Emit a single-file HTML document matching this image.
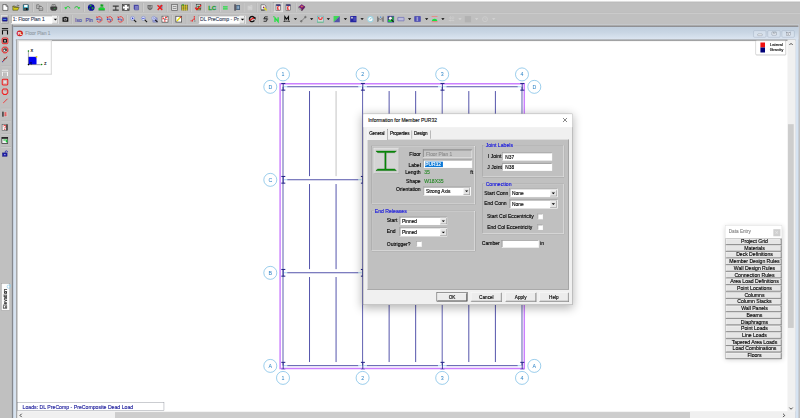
<!DOCTYPE html>
<html lang="en"><head><meta charset="utf-8"><title>RISAFloor - Information for Member PUR32</title>
<style>
html,body{margin:0;padding:0;background:#c0c0c0;}
body{width:800px;height:418px;overflow:hidden;background:#c0c0c0;font-family:"Liberation Sans",sans-serif;}
#root{will-change:opacity;position:absolute;left:0;top:0;width:1920px;height:1004px;transform:scale(0.4166667);transform-origin:0 0;overflow:hidden;font-size:12px;color:#000;}
#root div,#root span,#root svg{position:absolute;box-sizing:border-box;}
.ab{position:absolute;}
.tx{white-space:nowrap;line-height:1;-webkit-text-stroke:0.3px;}
.vsep{width:2px;height:40px;border-left:1px solid #8a8a8a;border-right:1px solid #f4f4f4;}
.ic{width:16px;height:16px;overflow:visible;}
.arr{width:0;height:0;border-left:4px solid transparent;border-right:4px solid transparent;border-top:4.5px solid #000;}
.combo{background:#fff;border:1px solid #7a7a7a;}
.cbtn{background:#e1e1e1;border:1px solid #adadad;}
.inp{background:#fff;border:1px solid;border-color:#6a6a6a #fafafa #fafafa #6a6a6a;box-shadow:inset 1px 1px 0 #8e8e8e;}
.sunk{border:1px solid;border-color:#6a6a6a #fafafa #fafafa #6a6a6a;box-shadow:inset 1px 1px 0 #8e8e8e;}
.grp{border:1px solid;border-color:#9a9a9a #f2f2f2 #f2f2f2 #9a9a9a;box-shadow:1px 1px 0 #f2f2f2 inset, 1px 1px 0 #9a9a9a;}
.glab{color:#1414e0;background:#c0c0c0;padding:0 2px;}
.btn{background:#ececec;border:1px solid;border-color:#fdfdfd #3c3c3c #3c3c3c #fdfdfd;box-shadow:inset -1px -1px 0 #8c8c8c;text-align:center;}
.chk{background:#fff;border:1px solid;border-color:#7a7a7a #f4f4f4 #f4f4f4 #7a7a7a;box-shadow:inset 1px 1px 0 #b0b0b0;width:13px;height:13px;}
.deb{background:#e6e6e6;border:1px solid;border-color:#fff #555 #555 #fff;box-shadow:0 0 0 1px #888;text-align:center;}
</style></head><body><div id="root">
<div id="toolbars" style="left:0;top:0;width:1920px;height:61.4px;background:#c0c0c0;">
<div style="left:0;top:0;width:1920px;height:7.4px;background:linear-gradient(#ffffff,#fbfbfb 30%,#d8d8d8 55%,#bababa 80%,#c0c0c0);"></div>
<div style="left:0;top:31.2px;width:1920px;height:2px;border-top:1px solid #acacac;border-bottom:1.2px solid #e2e2e2;"></div>
<div style="left:655px;top:5px;width:24px;height:24px;background:#d2d2d2;border:1px solid;border-color:#8a8a8a #f4f4f4 #f4f4f4 #8a8a8a;"></div>
<svg class="ic" style="left:5.3px;top:9.5px;width:16px;height:16px;" viewBox="0 0 16 16"><path d="M1.8 1H9.5L13.8 5V15H1.8Z" fill="#fff" stroke="#2a2a2a" stroke-width="1.4"/><path d="M9.5 1V5H13.8" fill="none" stroke="#2a2a2a" stroke-width="1.2"/></svg>
<svg class="ic" style="left:29.5px;top:9.5px;width:16px;height:16px;" viewBox="0 0 16 16"><path d="M0.8 4.5H6L7.5 6.5H12.5V8.5" fill="#a8a018" stroke="#3a3a0a" stroke-width="1.2"/><path d="M0.8 14.5V4.5L4 8H16L12.5 14.5Z" fill="#d0c81c" stroke="#3a3a10" stroke-width="1.2"/><path d="M10 3.5C12 1.5 14 2.5 14.5 4.5M14.5 4.5L15.5 2.5M14.5 4.5L12.5 4" fill="none" stroke="#222"/></svg>
<svg class="ic" style="left:53.8px;top:9.5px;width:16px;height:16px;" viewBox="0 0 16 16"><rect x="1.5" y="1.5" width="13" height="13" fill="#18a4c0" stroke="#1a1a2a"/><rect x="4" y="2" width="8" height="5.5" fill="#fff"/><rect x="3.5" y="9" width="9" height="5.5" fill="#101010"/><rect x="5" y="10" width="2" height="3.5" fill="#ddd"/></svg>
<svg class="ic" style="left:87.4px;top:9.5px;width:16px;height:16px;" viewBox="0 0 16 16"><path d="M1 1.5H6.5L9 4V10.5H1Z" fill="#d0d0d0" stroke="#4a4a4a" stroke-width="1.3"/><path d="M2.5 4H6M2.5 6.5H7.5" stroke="#666"/><path d="M7 5.5H12.5L15.5 8.5V15H7Z" fill="#dcdcdc" stroke="#3a3a3a" stroke-width="1.3"/><path d="M9 9.5H13.5M9 12H13.5" stroke="#555" stroke-width="1.2"/></svg>
<svg class="ic" style="left:120.5px;top:9.5px;width:16px;height:16px;" viewBox="0 0 16 16"><path d="M4 1H11.5L12.5 3.5V7H4Z" fill="#dcdcdc" stroke="#333" stroke-width="1.2"/><path d="M6 3H10M6 5H11" stroke="#555"/><path d="M0.5 6.5H15.5V12.5H0.5Z" fill="#444" stroke="#1c1c1c"/><path d="M2 12.5H14L13 15H3Z" fill="#5a5a5a" stroke="#1c1c1c"/><rect x="8" y="9" width="4" height="1.6" fill="#40b050"/></svg>
<svg class="ic" style="left:154.3px;top:9.5px;width:16px;height:16px;" viewBox="0 0 16 16"><path d="M4.5 10.5C4 5 12.5 3.5 14 10" fill="none" stroke="#22b436" stroke-width="2"/><path d="M0.5 7L7.5 7.8L3.2 13Z" fill="#20e03c"/></svg>
<svg class="ic" style="left:176.9px;top:9.5px;width:16px;height:16px;" viewBox="0 0 16 16"><path d="M11.5 10.5C12 5 3.5 3.5 2 10" fill="none" stroke="#22b436" stroke-width="2"/><path d="M15.5 7L8.5 7.8L12.8 13Z" fill="#20e03c"/></svg>
<svg class="ic" style="left:211.2px;top:9.5px;width:16px;height:16px;" viewBox="0 0 16 16"><g transform="translate(-0.8 -0.8) scale(1.1)"><circle cx="8" cy="8" r="7.3" fill="#101098"/><path d="M5 2C8 1 10 3 8.5 5C7 6 5 6.5 4 5Z M9 7.5C11 6.5 13.5 8 13 10C12 12 10 13 9 11Z M3 9C4.5 9 5.5 11 5 13C3.5 12.5 2.5 11 3 9Z" fill="#18a030"/></g></svg>
<svg class="ic" style="left:235.7px;top:9.5px;width:16px;height:16px;" viewBox="0 0 16 16"><rect x="5" y="0.5" width="7" height="5.5" fill="#20c030"/><path d="M6 2H9M7 4H11" stroke="#0a5a14" stroke-width="1.2"/><rect x="0.5" y="9" width="15" height="5" fill="#18d830"/><path d="M0.5 14.5H15.5" stroke="#0a6a18" stroke-width="1.4"/><path d="M3 8H13" stroke="#2aa83a" stroke-width="1.6"/></svg>
<svg class="ic" style="left:269.8px;top:9.5px;width:16px;height:16px;" viewBox="0 0 16 16"><path d="M0.7 3.2H15V6.1H9.1V12.8H15V15.9H0.7V12.8H6.7V6.1H0.7Z" fill="#383838"/></svg>
<svg class="ic" style="left:293.8px;top:9.5px;width:16px;height:16px;" viewBox="0 0 16 16"><g transform="translate(-1.2 0) scale(1.15 1)"><rect x="1" y="1" width="14" height="14" fill="#6e6e6e" stroke="#3c3c3c" stroke-width="1.4"/><path d="M8 2V14M2 8H14" stroke="#fff" stroke-width="4.6"/><path d="M2 2L5 5M14 2L11 5M2 14L5 11M14 14L11 11" stroke="#2a2a2a" stroke-width="1"/></g></svg>
<svg class="ic" style="left:319.2px;top:9.5px;width:16px;height:16px;" viewBox="0 0 16 16"><path d="M2 1.5H13V12H2Z" fill="#4a4aa8"/><path d="M4 3.5H13.5V14H4Z" fill="#5a5ab4" stroke="#38389a"/><path d="M5 6H13M5 9H13M5 12H13" stroke="#b8b8e0" stroke-width="1.2"/></svg>
<svg class="ic" style="left:351.8px;top:9.5px;width:16px;height:16px;" viewBox="0 0 16 16"><path d="M2 2H14V8C14 11 11 13.5 8 14.5C5 13.5 2 11 2 8Z" fill="#6a6a6a"/><path d="M5.5 4V8C5.5 10 10.5 10 10.5 8V4" fill="none" stroke="#c8c8c8" stroke-width="1.4"/><path d="M12 3V8" stroke="#bbb" stroke-width="1.2"/></svg>
<svg class="ic" style="left:375.8px;top:9.5px;width:16px;height:16px;" viewBox="0 0 16 16"><rect x="7" y="2" width="7" height="9" fill="#8a7aa0"/><path d="M2 2.5L13.5 14M13 2L2.5 14" stroke="#f01818" stroke-width="3"/></svg>
<svg class="ic" style="left:410.9px;top:9.5px;width:16px;height:16px;" viewBox="0 0 16 16"><rect x="1" y="1" width="14" height="14" fill="#e6e6e6" stroke="#5a5a5a" stroke-width="1.6"/><path d="M4 5.5H12M4 10.5H12" stroke="#555" stroke-width="1.4"/><path d="M4 3V13M12 3V13" stroke="#999" stroke-width="1"/></svg>
<svg class="ic" style="left:434.6px;top:9.5px;width:16px;height:16px;" viewBox="0 0 16 16"><rect x="1" y="1.5" width="14" height="13.5" fill="#c8b818"/><path d="M1 1.5V15M5.5 1.5V15M10 1.5V15M14.8 1.5V15" stroke="#3a3a20" stroke-width="1.5"/><path d="M1 5H15M1 9H15M1 12.5H15" stroke="#e8e070" stroke-width="1"/><rect x="1.5" y="0.5" width="5" height="2.5" fill="#20a030"/></svg>
<svg class="ic" style="left:467.5px;top:9.5px;width:16px;height:16px;" viewBox="0 0 16 16"><rect x="3" y="1" width="11" height="8.5" fill="#f4f4f4" stroke="#333" stroke-width="1.4"/><rect x="5.5" y="3.5" width="5" height="4" fill="#208040"/><rect x="5" y="10.5" width="9" height="3.5" fill="#b8b030" stroke="#333"/><path d="M0.5 8.5L4 13L14.5 2.5" fill="none" stroke="#f01010" stroke-width="2.8"/></svg>
<svg class="ic" style="left:532.8px;top:9.5px;width:16px;height:16px;" viewBox="0 0 16 16"><path d="M2.2 6.3H13.4M2.2 11.4H13.4" stroke="#24e044" stroke-width="3.2"/></svg>
<svg class="ic" style="left:561.1px;top:9.5px;width:16px;height:16px;" viewBox="0 0 16 16"><rect x="1" y="0.5" width="4.5" height="15" fill="#4a4a55"/><rect x="2.2" y="0.5" width="1.4" height="15" fill="#8a8a98"/><rect x="7" y="2.5" width="7.5" height="11" fill="#4a78a8" stroke="#3a4a5a"/><rect x="9" y="5" width="3" height="6" fill="#b0c0d0"/></svg>
<svg class="ic" style="left:592.3px;top:9.5px;width:16px;height:16px;" viewBox="0 0 16 16"><path d="M3 4.5H8L9.5 3H13V13.5H3Z" fill="#cdcdcd" stroke="#d8d8d8"/><path d="M5 8H12M5 11H12" stroke="#dadada" stroke-width="1.2"/></svg>
<svg class="ic" style="left:625.4px;top:9.5px;width:16px;height:16px;" viewBox="0 0 16 16"><path d="M1.5 1.5H10L13 4.5V13.5H1.5Z" fill="#fafafa" stroke="#3a3a3a" stroke-width="1.3"/><circle cx="8" cy="7.5" r="2" fill="#c01830"/><circle cx="6.8" cy="8.5" r="1.2" fill="#2030b0"/><path d="M9 8.5L15 15" stroke="#e8e010" stroke-width="3"/><path d="M1.5 14.5H10" stroke="#222" stroke-width="1.5"/></svg>
<svg class="ic" style="left:660px;top:9.5px;width:16px;height:16px;" viewBox="0 0 16 16"><rect x="2.5" y="1.5" width="11" height="14" fill="#fff" stroke="#333" stroke-width="1.2"/><rect x="3" y="1" width="10" height="3" fill="#181870"/><path d="M6 6V13.2M6 6H10.5M6 9.5H10M6 13.2H10.5" stroke="#e02828" stroke-width="2" fill="none"/></svg>
<svg class="ic" style="left:683.8px;top:9.5px;width:16px;height:16px;" viewBox="0 0 16 16"><rect x="2.5" y="1.5" width="11" height="14" fill="#fff" stroke="#333" stroke-width="1.2"/><rect x="3" y="1" width="10" height="3" fill="#181870"/><path d="M6 6V13.2M6 6H10.5M6 9.5H10M6 13.2H10.5" stroke="#e02828" stroke-width="2" fill="none"/></svg>
<svg class="ic" style="left:715.7px;top:9.5px;width:16px;height:16px;" viewBox="0 0 16 16"><path d="M1 7L8 1L15 5.5L8.5 12.5Z" fill="#901c80" stroke="#601060"/><path d="M1 7L8.5 12.5V15.5L1 10Z" fill="#f4f4f4" stroke="#222"/><path d="M8.5 12.5L15 5.5V8.5L8.5 15.5Z" fill="#701868" stroke="#301030"/><path d="M7 4L11 5.5L8 7.5Z" fill="#f0d020"/></svg>
<span class="tx" style="left:499.9px;top:10.5px;font-size:14.4px;font-weight:bold;color:#24a03a;letter-spacing:-0.2px;-webkit-text-stroke:0.7px #24a03a;">LC</span>
<div style="left:78.4px;top:7px;width:3px;height:22px;border-left:1px solid #adadad;border-right:1.6px solid #dedede;"></div>
<div style="left:111.8px;top:7px;width:3px;height:22px;border-left:1px solid #adadad;border-right:1.6px solid #dedede;"></div>
<div style="left:143.9px;top:7px;width:3px;height:22px;border-left:1px solid #adadad;border-right:1.6px solid #dedede;"></div>
<div style="left:200.3px;top:7px;width:3px;height:22px;border-left:1px solid #adadad;border-right:1.6px solid #dedede;"></div>
<div style="left:261.1px;top:7px;width:3px;height:22px;border-left:1px solid #adadad;border-right:1.6px solid #dedede;"></div>
<div style="left:342.2px;top:7px;width:3px;height:22px;border-left:1px solid #adadad;border-right:1.6px solid #dedede;"></div>
<div style="left:400.0px;top:7px;width:3px;height:22px;border-left:1px solid #adadad;border-right:1.6px solid #dedede;"></div>
<div style="left:456.9px;top:7px;width:3px;height:22px;border-left:1px solid #adadad;border-right:1.6px solid #dedede;"></div>
<div style="left:490.7px;top:7px;width:3px;height:22px;border-left:1px solid #adadad;border-right:1.6px solid #dedede;"></div>
<div style="left:525.5px;top:7px;width:3px;height:22px;border-left:1px solid #adadad;border-right:1.6px solid #dedede;"></div>
<div style="left:582.9px;top:7px;width:3px;height:22px;border-left:1px solid #adadad;border-right:1.6px solid #dedede;"></div>
<div style="left:616.0px;top:7px;width:3px;height:22px;border-left:1px solid #adadad;border-right:1.6px solid #dedede;"></div>
<div style="left:650.3px;top:7px;width:3px;height:22px;border-left:1px solid #adadad;border-right:1.6px solid #dedede;"></div>
<div style="left:707.9px;top:7px;width:3px;height:22px;border-left:1px solid #adadad;border-right:1.6px solid #dedede;"></div>
<div style="left:2.6px;top:36px;width:17.8px;height:20px;background:#c8c8c8;border:1px solid;border-color:#f8f8f8 #7a7a7a #7a7a7a #f8f8f8;"></div>
<svg class="ic" style="left:4.1px;top:38.5px;width:15px;height:15px;" viewBox="0 0 16 16"><rect x="1.5" y="3" width="13" height="10" rx="1.5" fill="#1818a0" stroke="#303050"/><path d="M4 8H12" stroke="#60c0f0" stroke-width="2"/></svg>
<div class="sunk" style="left:26.4px;top:36.5px;width:113.5px;height:20.5px;background:#fff;border-color:#7a7a7a #f4f4f4 #f4f4f4 #7a7a7a;"></div>
<span class="tx" style="left:30.5px;top:41px;font-size:11.8px;color:#38445c;">1: Floor Plan 1</span>
<div style="left:125px;top:38px;width:13.9px;height:17.5px;background:#ececec;border:1px solid;border-color:#ffffff #8e8e8e #8e8e8e #ffffff;"></div>
<div class="arr" style="left:128.5px;top:45px;"></div>
<div class="sunk" style="left:475.9px;top:36.5px;width:113.5px;height:20.5px;background:#fff;border-color:#7a7a7a #f4f4f4 #f4f4f4 #7a7a7a;"></div>
<div style="left:480px;top:38px;width:93.6px;height:19px;overflow:hidden;"><span class="tx" style="left:0;top:3px;font-size:12.2px;color:#38445c;">DL PreComp - PreComposite Dead Load</span></div>
<div style="left:574.6px;top:38px;width:13.9px;height:17.5px;background:#ececec;border:1px solid;border-color:#ffffff #8e8e8e #8e8e8e #ffffff;"></div>
<div class="arr" style="left:578px;top:45px;"></div>
<svg class="ic" style="left:148.6px;top:38px;width:16px;height:16px;" viewBox="0 0 16 16"><path d="M1 3.5H5L6 2H10L11 3.5H15V14H1Z" fill="#101010"/><rect x="4" y="6" width="8" height="5" rx="1" fill="#b8b8b8"/><rect x="6" y="7.5" width="4" height="2" fill="#303030"/></svg>
<svg class="ic" style="left:230.4px;top:38px;width:16px;height:16px;" viewBox="0 0 16 16"><path d="M5.5 2.5A6.6 6.6 0 1 1 2.6 12" fill="none" stroke="#f03434" stroke-width="2.1"/><path d="M0.5 1.5L5.5 3L2.5 6Z" fill="#f01818"/><path d="M1.5 8H9" stroke="#2030c0" stroke-width="1.6"/><path d="M1 8L4 6V10Z" fill="#2030c0"/><text x="8" y="11.5" font-size="8" font-weight="bold" font-family="Liberation Sans, sans-serif" fill="#2838b0">x</text></svg>
<svg class="ic" style="left:255.4px;top:38px;width:16px;height:16px;" viewBox="0 0 16 16"><path d="M5.5 2.5A6.6 6.6 0 1 1 2.6 12" fill="none" stroke="#f03434" stroke-width="2.1"/><path d="M0.5 1.5L5.5 3L2.5 6Z" fill="#f01818"/><path d="M1.5 8H9" stroke="#2030c0" stroke-width="1.6"/><path d="M1 8L4 6V10Z" fill="#2030c0"/><text x="8" y="11.5" font-size="8" font-weight="bold" font-family="Liberation Sans, sans-serif" fill="#2838b0">y</text></svg>
<svg class="ic" style="left:280.6px;top:38px;width:16px;height:16px;" viewBox="0 0 16 16"><path d="M5.5 2.5A6.6 6.6 0 1 1 2.6 12" fill="none" stroke="#f03434" stroke-width="2.1"/><path d="M0.5 1.5L5.5 3L2.5 6Z" fill="#f01818"/><path d="M1.5 8H9" stroke="#2030c0" stroke-width="1.6"/><path d="M1 8L4 6V10Z" fill="#2030c0"/><text x="8" y="11.5" font-size="8" font-weight="bold" font-family="Liberation Sans, sans-serif" fill="#2838b0">z</text></svg>
<svg class="ic" style="left:312.2px;top:38px;width:16px;height:16px;" viewBox="0 0 16 16"><circle cx="6" cy="6" r="4.8" fill="#e8ecf8" stroke="#6a78c0" stroke-width="1.3"/><path d="M4.5 3.5L9 6L4.5 8.5Z" fill="#2030c8"/><path d="M9.5 9.5L15 15" stroke="#151515" stroke-width="2.6"/></svg>
<svg class="ic" style="left:337.7px;top:38px;width:16px;height:16px;" viewBox="0 0 16 16"><circle cx="6" cy="6" r="4.8" fill="#e8ecf8" stroke="#6a78c0" stroke-width="1.3"/><path d="M3 6H9" stroke="#2030c8" stroke-width="1.8"/><path d="M9.5 9.5L15 15" stroke="#151515" stroke-width="2.6"/></svg>
<svg class="ic" style="left:363.1px;top:38px;width:16px;height:16px;" viewBox="0 0 16 16"><rect x="4" y="5" width="10" height="10" fill="#9aa0d8" stroke="#5a60b0"/><circle cx="6" cy="6" r="4.8" fill="#e8ecf8" stroke="#6a78c0" stroke-width="1.3"/><circle cx="6" cy="6" r="1.8" fill="none" stroke="#3040c0"/><path d="M9.5 9.5L15 15" stroke="#151515" stroke-width="2.6"/></svg>
<svg class="ic" style="left:388.1px;top:38px;width:16px;height:16px;" viewBox="0 0 16 16"><rect x="0.8" y="0.8" width="14.4" height="14.4" fill="#f4f4f4" stroke="#3a3a3a" stroke-width="1.4"/><circle cx="8" cy="8" r="4.6" fill="none" stroke="#fff" stroke-width="3.4"/><circle cx="8" cy="8" r="4.6" fill="none" stroke="#f03030" stroke-width="3.4" stroke-dasharray="3.6 3.6" stroke-dashoffset="1.8"/><circle cx="8" cy="8" r="2.4" fill="#808080"/></svg>
<svg class="ic" style="left:420.5px;top:38px;width:16px;height:16px;" viewBox="0 0 16 16"><rect x="1" y="1" width="14" height="14" fill="#fff" stroke="#3a3a3a" stroke-width="1.6"/><path d="M3.5 12.5L12 3.5" stroke="#e8e010" stroke-width="3.4"/><path d="M11.5 4L13.5 2" stroke="#e02020" stroke-width="3.4"/><path d="M2.5 14L4.5 13L3.2 11.8Z" fill="#222"/></svg>
<svg class="ic" style="left:455.3px;top:38px;width:16px;height:16px;" viewBox="0 0 16 16"><path d="M2 12H7V9H11V5" fill="none" stroke="#e82020" stroke-width="1.6" stroke-dasharray="2 1"/><rect x="10" y="1" width="3" height="3" fill="#f02020"/><rect x="10" y="6" width="3" height="3" fill="#f02020"/><rect x="5" y="10.5" width="3" height="3" fill="#f02020"/><rect x="11" y="11" width="3" height="3" fill="#7a8a8a"/></svg>
<svg class="ic" style="left:597.1px;top:38px;width:16px;height:16px;" viewBox="0 0 16 16"><path d="M13.5 11A6.3 6.3 0 1 1 14 5.5" fill="none" stroke="#0c0c0c" stroke-width="3.3"/><path d="M9.5 3.5H16.5V9.5Z" fill="#0c0c0c"/><path d="M1 11L6 9L9 6L13 7" fill="none" stroke="#f01818" stroke-width="2.4"/><circle cx="10" cy="6" r="1.8" fill="#f01818"/></svg>
<svg class="ic" style="left:630.2px;top:38px;width:16px;height:16px;" viewBox="0 0 16 16"><path d="M12.5 2.5H5.5L3.5 7H11.5L9.5 13H2.5" fill="none" stroke="#151515" stroke-width="2"/><path d="M1.5 7.5H14" stroke="#333" stroke-width="1"/></svg>
<svg class="ic" style="left:654.7px;top:38px;width:16px;height:16px;" viewBox="0 0 16 16"><rect x="0.5" y="1" width="2.4" height="2.4" fill="#28d840"/><path d="M5 14.5V5L12.5 14V3.5" fill="none" stroke="#24e044" stroke-width="3.2"/></svg>
<svg class="ic" style="left:679.9px;top:38px;width:16px;height:16px;" viewBox="0 0 16 16"><path d="M3.5 10.5V2L8 8L12.5 2V10.5" fill="none" stroke="#0a0a0a" stroke-width="2.5"/><path d="M1 13H15" stroke="#111" stroke-width="1.6"/><path d="M0 13L3 11V15Z M16 13L13 11V15Z" fill="#111"/></svg>
<svg class="ic" style="left:720.2px;top:38px;width:16px;height:16px;" viewBox="0 0 16 16"><path d="M3 13L13 3" stroke="#5a5a5a" stroke-width="1.5"/><circle cx="3" cy="13" r="2" fill="#8a8a8a" stroke="#444"/><circle cx="13" cy="3" r="2" fill="#8a8a8a" stroke="#444"/></svg>
<svg class="ic" style="left:760.8px;top:38px;width:16px;height:16px;" viewBox="0 0 16 16"><rect x="0.8" y="0.8" width="14.4" height="14.4" fill="#d4d8d8" stroke="#60b4b4" stroke-width="1.6"/><path d="M0.5 15.2H15.5" stroke="#50c060" stroke-width="1.4"/><path d="M4 3V5.5C4 9.5 12 9.5 12 5.5V3" fill="none" stroke="#f02828" stroke-width="2.8"/></svg>
<svg class="ic" style="left:800.4px;top:38px;width:16px;height:16px;" viewBox="0 0 16 16"><path d="M0.5 0.5H15.5L0.5 15.5Z" fill="#40d858"/><path d="M15.5 0.5V15.5H0.5Z" fill="#5454a8"/></svg>
<svg class="ic" style="left:840.2px;top:38px;width:16px;height:16px;" viewBox="0 0 16 16"><rect x="0.5" y="0.5" width="15" height="15" rx="1" fill="#2424a0"/><rect x="3" y="2.5" width="3.5" height="4" fill="#f0f0e0"/><rect x="8" y="3" width="6" height="9" fill="#4a4ab8"/></svg>
<svg class="ic" style="left:881px;top:38px;width:16px;height:16px;" viewBox="0 0 16 16"><circle cx="8" cy="8" r="6.3" fill="#fdfdfd" stroke="#9ad4e4" stroke-width="2.4"/><path d="M8 8L10.5 4.5M8 8L6 9.5" stroke="#2a9aa8" stroke-width="1.3"/><path d="M8 0V2M8 14V16" stroke="#9ad4e4" stroke-width="2"/></svg>
<svg class="ic" style="left:904.8px;top:38px;width:16px;height:16px;" viewBox="0 0 16 16"><path d="M1.5 1.5V14.5M14.5 1.5V14.5" stroke="#4a4a4a" stroke-width="1.8"/><path d="M3.5 13V5L8 10L12.5 5V13" fill="none" stroke="#6a6a6a" stroke-width="1.6"/><circle cx="8.5" cy="3" r="1.6" fill="#2a80e0"/></svg>
<svg class="ic" style="left:929.8px;top:38px;width:16px;height:16px;" viewBox="0 0 16 16"><rect x="0.8" y="0.8" width="14.4" height="14.4" fill="#3a3a58" stroke="#4848c0" stroke-width="1.4"/><rect x="1.5" y="9.5" width="13" height="5" fill="#20d040"/><rect x="11.5" y="2" width="3" height="8" fill="#20c040"/><circle cx="7" cy="6" r="3.6" fill="#f8f8f8"/><path d="M9 9L14.5 14.5" stroke="#0a0a0a" stroke-width="2.4"/></svg>
<svg class="ic" style="left:953.5px;top:38px;width:16px;height:16px;" viewBox="0 0 16 16"><rect x="0.7" y="3.8" width="15" height="8.2" rx="0.6" fill="#bcbcdc" stroke="#6464b2" stroke-width="1.5"/></svg>
<svg class="ic" style="left:994.1px;top:38px;width:16px;height:16px;" viewBox="0 0 16 16"><rect x="0.5" y="1" width="15" height="13" fill="#3434a8"/><rect x="6" y="2.5" width="2.2" height="10" fill="#f4f4f4"/><rect x="9" y="2.5" width="4.5" height="10" fill="#5a5ac0"/><path d="M3 2.5V12.5" stroke="#7070c8" stroke-width="1.2"/></svg>
<svg class="ic" style="left:1034.6px;top:38px;width:16px;height:16px;" viewBox="0 0 16 16"><path d="M1 1.5H15" stroke="#f07878" stroke-width="1.8"/><path d="M1 14H15" stroke="#f06868" stroke-width="1.8"/><path d="M1.5 12.5C2 5 14 5 14.5 12.5Z" fill="#18e040"/></svg>
<svg class="ic" style="left:1075.7px;top:38px;width:16px;height:16px;" viewBox="0 0 16 16"><path d="M5 1V15M11 1V15M1 5H15M1 11H15" stroke="#d4d4d4" stroke-width="1.6" stroke-dasharray="3 1.5"/></svg>
<svg class="ic" style="left:1114.6px;top:38px;width:16px;height:16px;" viewBox="0 0 16 16"><rect x="0.5" y="0.5" width="15" height="15" fill="#b2b2b2"/></svg>
<svg class="ic" style="left:1155.6px;top:38px;width:16px;height:16px;" viewBox="0 0 16 16"><circle cx="8" cy="8" r="6" fill="none" stroke="#cfcfcf" stroke-width="1.8"/><path d="M8 4V8H11" stroke="#cfcfcf" stroke-width="1.4" fill="none"/></svg>
<div class="arr" style="left:704.5px;top:43.5px;"></div>
<div class="arr" style="left:744.3px;top:43.5px;"></div>
<div class="arr" style="left:784.4px;top:43.5px;"></div>
<div class="arr" style="left:825px;top:43.5px;"></div>
<div class="arr" style="left:864.8px;top:43.5px;"></div>
<div class="arr" style="left:979px;top:43.5px;"></div>
<div class="arr" style="left:1019.6px;top:43.5px;"></div>
<div class="arr" style="left:1059.4px;top:43.5px;"></div>
<div class="arr" style="left:1099.8px;top:43.5px;border-top-color:#d6d6d6;"></div>
<div class="arr" style="left:1139.8px;top:43.5px;border-top-color:#d6d6d6;"></div>
<div class="arr" style="left:1180.6px;top:43.5px;border-top-color:#d6d6d6;"></div>
<span class="tx" style="left:180.2px;top:42px;font-size:12.2px;font-weight:normal;color:#4646aa;letter-spacing:0;">Iso</span>
<span class="tx" style="left:205.2px;top:42px;font-size:12.2px;font-weight:normal;color:#4646aa;letter-spacing:0;">Pln</span>
<div style="left:172.0px;top:36px;width:3px;height:22px;border-left:1px solid #adadad;border-right:1.6px solid #dedede;"></div>
<div style="left:303.3px;top:36px;width:3px;height:22px;border-left:1px solid #adadad;border-right:1.6px solid #dedede;"></div>
<div style="left:411.1px;top:36px;width:3px;height:22px;border-left:1px solid #adadad;border-right:1.6px solid #dedede;"></div>
<div style="left:445.6px;top:36px;width:3px;height:22px;border-left:1px solid #adadad;border-right:1.6px solid #dedede;"></div>
<div style="left:621.3px;top:36px;width:3px;height:22px;border-left:1px solid #adadad;border-right:1.6px solid #dedede;"></div>
</div>
<div id="sidebar" style="left:0;top:61.4px;width:29.8px;height:950px;background:#c0c0c0;">
<svg class="ic" style="left:4.1px;top:6.0px;width:16px;height:16px;" viewBox="0 0 16 16"><path d="M0.5 1.8H15.5" stroke="#0a0a0a" stroke-width="2.6"/><path d="M0.5 6H15.5" stroke="#0a0a0a" stroke-width="1.6"/><path d="M2 6V15.5M14 6V15.5" stroke="#0a0a0a" stroke-width="2.6"/></svg>
<svg class="ic" style="left:4.1px;top:28.3px;width:16px;height:16px;" viewBox="0 0 16 16"><rect x="1.2" y="1.2" width="13.6" height="13.6" rx="2.5" fill="#c8b4b4" stroke="#f01818" stroke-width="2.3"/><rect x="4.3" y="5" width="7.4" height="6" fill="#b0b0b0" stroke="#0a0a0a" stroke-width="2.2"/></svg>
<svg class="ic" style="left:4.1px;top:50.4px;width:16px;height:16px;" viewBox="0 0 16 16"><path d="M4 1.2H12L14.8 5V11L11 14.8H5L1.2 11V5Z" fill="#c8b4b4" stroke="#f01818" stroke-width="2.3"/><rect x="5" y="4.5" width="7" height="6" fill="#222"/><rect x="4" y="6.5" width="5" height="5" fill="#eee" stroke="#333"/></svg>
<svg class="ic" style="left:4.1px;top:73.0px;width:16px;height:16px;" viewBox="0 0 16 16"><path d="M2 14L6 10V7H10L13 2" fill="none" stroke="#111" stroke-width="1.8"/><path d="M3 13L6.5 9.5M9 7L13 2.5" stroke="#f01818" stroke-width="2"/><circle cx="2.5" cy="14" r="1.3" fill="#3030c0"/></svg>
<svg class="ic" style="left:4.1px;top:105.8px;width:16px;height:16px;" viewBox="0 0 16 16"><path d="M0.5 1.8H15.5" stroke="#f6f6f6" stroke-width="2.4"/><path d="M0.5 6H15.5" stroke="#f6f6f6" stroke-width="1.5"/><path d="M2 6V15.5M14 6V15.5" stroke="#f6f6f6" stroke-width="2.4"/><path d="M3.5 7V15M1 3.5H15" stroke="#9a9a9a" stroke-width="0.8"/></svg>
<svg class="ic" style="left:4.1px;top:127.7px;width:16px;height:16px;" viewBox="0 0 16 16"><rect x="1.3" y="1.3" width="13.4" height="13.4" rx="2" fill="#d4b4b4" stroke="#ee2020" stroke-width="2.4"/><rect x="5" y="5" width="6" height="5.5" fill="#e6e0e0"/></svg>
<svg class="ic" style="left:4.1px;top:150.7px;width:16px;height:16px;" viewBox="0 0 16 16"><path d="M4 1.3H12L14.7 5V11L11 14.7H5L1.3 11V5Z" fill="#d4b4b4" stroke="#ee2020" stroke-width="2.4"/><rect x="5" y="5" width="6" height="5" fill="#e6e0e0"/><rect x="6" y="4" width="6" height="4" fill="#a09090" opacity="0.6"/></svg>
<svg class="ic" style="left:4.1px;top:173.3px;width:16px;height:16px;" viewBox="0 0 16 16"><path d="M2 14L14 2" stroke="#f02828" stroke-width="2"/><path d="M1.5 14.5L4 12" stroke="#f4f4f4" stroke-width="1.5"/></svg>
<svg class="ic" style="left:4.1px;top:205.0px;width:16px;height:16px;" viewBox="0 0 16 16"><rect x="1" y="2" width="4" height="12" fill="#4a4a4a"/><path d="M7 5H13M7 8H13M7 11H13" stroke="#f01818" stroke-width="1.8"/><rect x="6" y="2" width="9" height="12" fill="#e0d8d8" opacity="0.5"/><path d="M8.5 3V13" stroke="#f01818" stroke-width="1.5"/></svg>
<svg class="ic" style="left:4.1px;top:236.2px;width:16px;height:16px;" viewBox="0 0 16 16"><rect x="1" y="1" width="13" height="14" fill="#f2f2f2" stroke="#444" stroke-width="1.2"/><path d="M4.5 5C4.5 2 10.5 2 10.5 5C10.5 7.5 7.5 7 7.5 10" fill="none" stroke="#e81818" stroke-width="2.2"/><rect x="6.3" y="11.5" width="2.4" height="2.4" fill="#e81818"/><rect x="11" y="1" width="3" height="14" fill="#222"/></svg>
<svg class="ic" style="left:4.1px;top:267.6px;width:16px;height:16px;" viewBox="0 0 16 16"><rect x="0.5" y="1" width="14" height="14" fill="#f0f0f0" stroke="#222" stroke-width="1.6"/><rect x="0.5" y="0.5" width="14" height="3.5" fill="#111"/><path d="M4 7H12V10" fill="none" stroke="#18c838" stroke-width="2.6"/><path d="M9 9.5H15L12 13.5Z" fill="#18c838"/></svg>
<svg class="ic" style="left:4.1px;top:298.3px;width:16px;height:16px;" viewBox="0 0 16 16"><rect x="2" y="7" width="11" height="8" fill="#1c1ca8" stroke="#101070"/><path d="M8.5 7V4.5C8.5 1 14 1 14 4.5V5.5" fill="none" stroke="#2828b0" stroke-width="2"/><rect x="6.5" y="9.5" width="2.5" height="3" fill="#d8d8f8"/></svg>
<div style="left:3px;top:96.5px;width:24px;height:3px;border-top:1px solid #a4a4a4;border-bottom:1.4px solid #dedede;"></div>
<div style="left:3px;top:197.5px;width:24px;height:3px;border-top:1px solid #a4a4a4;border-bottom:1.4px solid #dedede;"></div>
<div style="left:3px;top:228.2px;width:24px;height:3px;border-top:1px solid #a4a4a4;border-bottom:1.4px solid #dedede;"></div>
<div style="left:3px;top:259.9px;width:24px;height:3px;border-top:1px solid #a4a4a4;border-bottom:1.4px solid #dedede;"></div>
<div style="left:3px;top:290.9px;width:24px;height:3px;border-top:1px solid #a4a4a4;border-bottom:1.4px solid #dedede;"></div>
<div style="left:3.1px;top:618.7px;width:21.4px;height:65px;background:#fbfbfb;border:1px solid #8f8f8f;"></div>
<span class="tx" style="left:7.9px;top:679.2px;font-size:11.5px;transform:rotate(-90deg);transform-origin:0 0;">Elevation</span>
<svg style="left:14.6px;top:620.9px;width:12px;height:12px;" viewBox="0 0 12 12"><circle cx="6" cy="6" r="4" fill="none" stroke="#8ccdf0" stroke-width="1.6"/><path d="M7 1L10 1L10 4" fill="none" stroke="#8ccdf0" stroke-width="1.4"/></svg>
</div>
<div id="child" style="left:27.6px;top:58.6px;width:1889.8px;height:960px;background:#d6e3f1;border-right:1.8px solid #b6bac2;">
<div style="left:0;top:0;width:100%;height:6.2px;background:linear-gradient(#c0c0c0,#acacac 35%,#8e8f92 75%,#a2aab4);"></div>
<div style="left:0;top:6.2px;width:100%;height:29.5px;background:linear-gradient(#c0cedd,#c9d6e4 45%,#dbe5f1);"></div>
</div>
<div style="left:40.3px;top:73px;width:14.4px;height:14.4px;border-radius:50%;background:#d02424;"></div>
<span class="tx" style="left:43px;top:76.8px;font-size:8.2px;font-weight:bold;color:#fff;letter-spacing:-0.3px;">FL</span>
<span class="tx" style="left:60.7px;top:75.8px;font-size:11.2px;color:#959ea8;">Floor Plan 1</span>
<div style="left:1808.2px;top:72.5px;width:31px;height:17.5px;border:1px solid #a2afc0;border-radius:3px;background:linear-gradient(#d3deea,#d9e3ef);"></div>
<div style="left:1817.6px;top:80.6px;width:12px;height:5px;border:1px solid #77818e;border-radius:1.5px;background:#f6f8fb;"></div>
<div style="left:1842px;top:72.5px;width:31px;height:17.5px;border:1px solid #a2afc0;border-radius:3px;background:linear-gradient(#d3deea,#d9e3ef);"></div>
<div style="left:1851.5px;top:75.8px;width:12px;height:9px;border:1px solid #77818e;border-radius:1.5px;background:#e9eef5;"></div>
<div style="left:1854.5px;top:78.2px;width:6px;height:3px;border:1px solid #77818e;background:#f6f8fb;"></div>
<div style="left:1876.3px;top:72.5px;width:31.2px;height:17.5px;border:1px solid #a2afc0;border-radius:3px;background:linear-gradient(#d3deea,#d9e3ef);"></div>
<div style="left:1886.9px;top:77.3px;width:10px;height:9px;border:1px solid #77818e;background:#f2f5f9;"></div>
<svg style="left:1884.9px;top:75.4px;width:14px;height:11px;" viewBox="0 0 14 11"><path d="M1 0.5L4 3.5M13 0.5L10 3.5M4.5 4.5L9.5 9M9.5 4.5L4.5 9" stroke="#77818e" stroke-width="1.3" fill="none"/></svg>
<div id="canvas" style="left:38.4px;top:94.3px;width:1870.6px;height:913.7px;background:#fff;"></div>
<div style="left:38.4px;top:94.1px;width:1870.6px;height:4.6px;background:linear-gradient(#b4bcc6,#9c9ea2 35%,#a4a4a4 75%,#e0e0e0);"></div>
<div style="left:27.1px;top:59px;width:4.8px;height:960px;background:linear-gradient(90deg,#c0c0c0,#8e9094 45%,#7c7e84 80%,#a8b0bc);"></div>
<div style="left:38.2px;top:95px;width:5px;height:960px;background:linear-gradient(90deg,#c4cbd4,#a6a8aa 30%,#b0b0b0 65%,#f4f4f4);"></div>
<div style="left:1909px;top:94.3px;width:1.2px;height:960px;background:#b8bec8;"></div>
<div style="left:42.7px;top:97.4px;width:81.6px;height:81.6px;background:#fff;border:2px solid #d9d9d9;border-right-color:#cfcfcf;border-bottom-color:#cfcfcf;"></div>
<svg style="left:42.7px;top:97.4px;width:81.6px;height:80.4px;" viewBox="0 0 34 33.5">
<rect x="10.5" y="16.4" width="8.1" height="7.7" fill="#0000f0"/>
<path d="M10.5 10.6V24.2H23.8" fill="none" stroke="#555" stroke-width="0.5"/>
<path d="M18.6 24.2H23.8" fill="none" stroke="#b0b0b0" stroke-width="0.6"/>
<circle cx="10.5" cy="10.7" r="0.75" fill="#0a8a0a"/><circle cx="23.8" cy="24.2" r="0.75" fill="#0a8a0a"/><circle cx="18.6" cy="16.4" r="0.9" fill="#e0d000"/><circle cx="10.6" cy="24.2" r="0.8" fill="#000"/>
<text x="12.6" y="11.2" font-size="4.1" font-weight="bold" font-family="Liberation Sans, sans-serif" fill="#000">X</text>
<text x="26.2" y="24.8" font-size="4.1" font-weight="bold" font-family="Liberation Sans, sans-serif" fill="#112">Z</text>
<text x="12.3" y="24.3" font-size="3.2" font-weight="bold" font-family="Liberation Sans, sans-serif" fill="#000">Y</text>
</svg>
<svg id="plan" style="left:0;top:0;width:1920px;height:1003.2px;" viewBox="0 0 800 418">
<path d="M280.1 83.7H524.3V368.5H280.1Z" fill="none" stroke="#cc80ff" stroke-width="1.45"/>
<path d="M283.0 86.75V365.65" stroke="#2a2a96" stroke-width="0.75" fill="none"/>
<path d="M362.6 86.75V365.65" stroke="#2a2a96" stroke-width="0.75" fill="none"/>
<path d="M442.2 86.75V365.65" stroke="#2a2a96" stroke-width="0.75" fill="none"/>
<path d="M522.0 86.75V365.65" stroke="#2a2a96" stroke-width="0.75" fill="none"/>
<path d="M287.2 86.75H358.40000000000003" stroke="#2a2a96" stroke-width="0.8" fill="none"/>
<path d="M284.0 86.75H287.2 M358.40000000000003 86.75H361.6" stroke="#8fd0f0" stroke-width="0.8" fill="none"/>
<path d="M366.8 86.75H438.0" stroke="#2a2a96" stroke-width="0.8" fill="none"/>
<path d="M363.6 86.75H366.8 M438.0 86.75H441.2" stroke="#8fd0f0" stroke-width="0.8" fill="none"/>
<path d="M446.4 86.75H517.8" stroke="#2a2a96" stroke-width="0.8" fill="none"/>
<path d="M443.2 86.75H446.4 M517.8 86.75H521.0" stroke="#8fd0f0" stroke-width="0.8" fill="none"/>
<path d="M287.2 179.75H358.40000000000003" stroke="#2a2a96" stroke-width="0.8" fill="none"/>
<path d="M284.0 179.75H287.2 M358.40000000000003 179.75H361.6" stroke="#8fd0f0" stroke-width="0.8" fill="none"/>
<path d="M366.8 179.75H438.0" stroke="#2a2a96" stroke-width="0.8" fill="none"/>
<path d="M363.6 179.75H366.8 M438.0 179.75H441.2" stroke="#8fd0f0" stroke-width="0.8" fill="none"/>
<path d="M446.4 179.75H517.8" stroke="#2a2a96" stroke-width="0.8" fill="none"/>
<path d="M443.2 179.75H446.4 M517.8 179.75H521.0" stroke="#8fd0f0" stroke-width="0.8" fill="none"/>
<path d="M287.2 272.75H358.40000000000003" stroke="#2a2a96" stroke-width="0.8" fill="none"/>
<path d="M284.0 272.75H287.2 M358.40000000000003 272.75H361.6" stroke="#8fd0f0" stroke-width="0.8" fill="none"/>
<path d="M366.8 272.75H438.0" stroke="#2a2a96" stroke-width="0.8" fill="none"/>
<path d="M363.6 272.75H366.8 M438.0 272.75H441.2" stroke="#8fd0f0" stroke-width="0.8" fill="none"/>
<path d="M446.4 272.75H517.8" stroke="#2a2a96" stroke-width="0.8" fill="none"/>
<path d="M443.2 272.75H446.4 M517.8 272.75H521.0" stroke="#8fd0f0" stroke-width="0.8" fill="none"/>
<path d="M287.2 365.65H358.40000000000003" stroke="#2a2a96" stroke-width="0.8" fill="none"/>
<path d="M284.0 365.65H287.2 M358.40000000000003 365.65H361.6" stroke="#8fd0f0" stroke-width="0.8" fill="none"/>
<path d="M366.8 365.65H438.0" stroke="#2a2a96" stroke-width="0.8" fill="none"/>
<path d="M363.6 365.65H366.8 M438.0 365.65H441.2" stroke="#8fd0f0" stroke-width="0.8" fill="none"/>
<path d="M446.4 365.65H517.8" stroke="#2a2a96" stroke-width="0.8" fill="none"/>
<path d="M443.2 365.65H446.4 M517.8 365.65H521.0" stroke="#8fd0f0" stroke-width="0.8" fill="none"/>
<path d="M309.53 91.05V176.15" stroke="#2a2a96" stroke-width="0.8" fill="none"/>
<path d="M309.53 184.05V269.15" stroke="#2a2a96" stroke-width="0.8" fill="none"/>
<path d="M309.53 277.05V362.04999999999995" stroke="#2a2a96" stroke-width="0.8" fill="none"/>
<path d="M336.07 91.05V176.15" stroke="#b4b4b4" stroke-width="0.8" fill="none"/>
<path d="M336.07 184.05V269.15" stroke="#2a2a96" stroke-width="0.8" fill="none"/>
<path d="M336.07 277.05V362.04999999999995" stroke="#2a2a96" stroke-width="0.8" fill="none"/>
<path d="M389.13 91.05V176.15" stroke="#2a2a96" stroke-width="0.8" fill="none"/>
<path d="M389.13 184.05V269.15" stroke="#2a2a96" stroke-width="0.8" fill="none"/>
<path d="M389.13 277.05V362.04999999999995" stroke="#2a2a96" stroke-width="0.8" fill="none"/>
<path d="M415.67 91.05V176.15" stroke="#2a2a96" stroke-width="0.8" fill="none"/>
<path d="M415.67 184.05V269.15" stroke="#2a2a96" stroke-width="0.8" fill="none"/>
<path d="M415.67 277.05V362.04999999999995" stroke="#2a2a96" stroke-width="0.8" fill="none"/>
<path d="M468.8 91.05V176.15" stroke="#2a2a96" stroke-width="0.8" fill="none"/>
<path d="M468.8 184.05V269.15" stroke="#2a2a96" stroke-width="0.8" fill="none"/>
<path d="M468.8 277.05V362.04999999999995" stroke="#2a2a96" stroke-width="0.8" fill="none"/>
<path d="M495.4 91.05V176.15" stroke="#2a2a96" stroke-width="0.8" fill="none"/>
<path d="M495.4 184.05V269.15" stroke="#2a2a96" stroke-width="0.8" fill="none"/>
<path d="M495.4 277.05V362.04999999999995" stroke="#2a2a96" stroke-width="0.8" fill="none"/>
<path d="M281.3 83.45H285.3" stroke="#1e1e86" stroke-width="1.0" fill="none"/>
<path d="M281.3 90.15H285.3" stroke="#1e1e86" stroke-width="1.0" fill="none"/>
<path d="M283.2 83.45V90.15" stroke="#2a2a90" stroke-width="0.9" fill="none"/>
<path d="M281.3 176.45H285.3" stroke="#1e1e86" stroke-width="1.0" fill="none"/>
<path d="M281.3 183.15H285.3" stroke="#1e1e86" stroke-width="1.0" fill="none"/>
<path d="M283.2 176.45V183.15" stroke="#2a2a90" stroke-width="0.9" fill="none"/>
<path d="M281.3 269.45H285.3" stroke="#1e1e86" stroke-width="1.0" fill="none"/>
<path d="M281.3 276.15H285.3" stroke="#1e1e86" stroke-width="1.0" fill="none"/>
<path d="M283.2 269.45V276.15" stroke="#2a2a90" stroke-width="0.9" fill="none"/>
<path d="M281.3 362.34999999999997H285.3" stroke="#1e1e86" stroke-width="1.0" fill="none"/>
<path d="M281.3 369.04999999999995H285.3" stroke="#8a78d0" stroke-width="1.0" fill="none"/>
<path d="M283.2 362.34999999999997V369.04999999999995" stroke="#2a2a90" stroke-width="0.9" fill="none"/>
<path d="M360.90000000000003 83.45H364.90000000000003" stroke="#1e1e86" stroke-width="1.0" fill="none"/>
<path d="M360.90000000000003 90.15H364.90000000000003" stroke="#1e1e86" stroke-width="1.0" fill="none"/>
<path d="M362.8 83.45V90.15" stroke="#2a2a90" stroke-width="0.9" fill="none"/>
<path d="M360.90000000000003 176.45H364.90000000000003" stroke="#1e1e86" stroke-width="1.0" fill="none"/>
<path d="M360.90000000000003 183.15H364.90000000000003" stroke="#1e1e86" stroke-width="1.0" fill="none"/>
<path d="M362.8 176.45V183.15" stroke="#2a2a90" stroke-width="0.9" fill="none"/>
<path d="M360.90000000000003 269.45H364.90000000000003" stroke="#1e1e86" stroke-width="1.0" fill="none"/>
<path d="M360.90000000000003 276.15H364.90000000000003" stroke="#1e1e86" stroke-width="1.0" fill="none"/>
<path d="M362.8 269.45V276.15" stroke="#2a2a90" stroke-width="0.9" fill="none"/>
<path d="M360.90000000000003 362.34999999999997H364.90000000000003" stroke="#1e1e86" stroke-width="1.0" fill="none"/>
<path d="M360.90000000000003 369.04999999999995H364.90000000000003" stroke="#8a78d0" stroke-width="1.0" fill="none"/>
<path d="M362.8 362.34999999999997V369.04999999999995" stroke="#2a2a90" stroke-width="0.9" fill="none"/>
<path d="M440.5 83.45H444.5" stroke="#1e1e86" stroke-width="1.0" fill="none"/>
<path d="M440.5 90.15H444.5" stroke="#1e1e86" stroke-width="1.0" fill="none"/>
<path d="M442.4 83.45V90.15" stroke="#2a2a90" stroke-width="0.9" fill="none"/>
<path d="M440.5 176.45H444.5" stroke="#1e1e86" stroke-width="1.0" fill="none"/>
<path d="M440.5 183.15H444.5" stroke="#1e1e86" stroke-width="1.0" fill="none"/>
<path d="M442.4 176.45V183.15" stroke="#2a2a90" stroke-width="0.9" fill="none"/>
<path d="M440.5 269.45H444.5" stroke="#1e1e86" stroke-width="1.0" fill="none"/>
<path d="M440.5 276.15H444.5" stroke="#1e1e86" stroke-width="1.0" fill="none"/>
<path d="M442.4 269.45V276.15" stroke="#2a2a90" stroke-width="0.9" fill="none"/>
<path d="M440.5 362.34999999999997H444.5" stroke="#1e1e86" stroke-width="1.0" fill="none"/>
<path d="M440.5 369.04999999999995H444.5" stroke="#8a78d0" stroke-width="1.0" fill="none"/>
<path d="M442.4 362.34999999999997V369.04999999999995" stroke="#2a2a90" stroke-width="0.9" fill="none"/>
<path d="M520.3 83.45H524.3" stroke="#1e1e86" stroke-width="1.0" fill="none"/>
<path d="M520.3 90.15H524.3" stroke="#1e1e86" stroke-width="1.0" fill="none"/>
<path d="M522.2 83.45V90.15" stroke="#2a2a90" stroke-width="0.9" fill="none"/>
<path d="M520.3 176.45H524.3" stroke="#1e1e86" stroke-width="1.0" fill="none"/>
<path d="M520.3 183.15H524.3" stroke="#1e1e86" stroke-width="1.0" fill="none"/>
<path d="M522.2 176.45V183.15" stroke="#2a2a90" stroke-width="0.9" fill="none"/>
<path d="M520.3 269.45H524.3" stroke="#1e1e86" stroke-width="1.0" fill="none"/>
<path d="M520.3 276.15H524.3" stroke="#1e1e86" stroke-width="1.0" fill="none"/>
<path d="M522.2 269.45V276.15" stroke="#2a2a90" stroke-width="0.9" fill="none"/>
<path d="M520.3 362.34999999999997H524.3" stroke="#1e1e86" stroke-width="1.0" fill="none"/>
<path d="M520.3 369.04999999999995H524.3" stroke="#8a78d0" stroke-width="1.0" fill="none"/>
<path d="M522.2 362.34999999999997V369.04999999999995" stroke="#2a2a90" stroke-width="0.9" fill="none"/>
<circle cx="283.0" cy="74.4" r="6.5" fill="#fff" stroke="#49a6dc" stroke-width="0.55"/>
<text x="283.0" y="76.30000000000001" font-size="5.3" text-anchor="middle" font-family="Liberation Sans, sans-serif" fill="#2b82c6">1</text>
<circle cx="283.0" cy="377.9" r="6.5" fill="#fff" stroke="#49a6dc" stroke-width="0.55"/>
<text x="283.0" y="379.79999999999995" font-size="5.3" text-anchor="middle" font-family="Liberation Sans, sans-serif" fill="#2b82c6">1</text>
<circle cx="362.6" cy="74.4" r="6.5" fill="#fff" stroke="#49a6dc" stroke-width="0.55"/>
<text x="362.6" y="76.30000000000001" font-size="5.3" text-anchor="middle" font-family="Liberation Sans, sans-serif" fill="#2b82c6">2</text>
<circle cx="362.6" cy="377.9" r="6.5" fill="#fff" stroke="#49a6dc" stroke-width="0.55"/>
<text x="362.6" y="379.79999999999995" font-size="5.3" text-anchor="middle" font-family="Liberation Sans, sans-serif" fill="#2b82c6">2</text>
<circle cx="442.2" cy="74.4" r="6.5" fill="#fff" stroke="#49a6dc" stroke-width="0.55"/>
<text x="442.2" y="76.30000000000001" font-size="5.3" text-anchor="middle" font-family="Liberation Sans, sans-serif" fill="#2b82c6">3</text>
<circle cx="442.2" cy="377.9" r="6.5" fill="#fff" stroke="#49a6dc" stroke-width="0.55"/>
<text x="442.2" y="379.79999999999995" font-size="5.3" text-anchor="middle" font-family="Liberation Sans, sans-serif" fill="#2b82c6">3</text>
<circle cx="522.0" cy="74.4" r="6.5" fill="#fff" stroke="#49a6dc" stroke-width="0.55"/>
<text x="522.0" y="76.30000000000001" font-size="5.3" text-anchor="middle" font-family="Liberation Sans, sans-serif" fill="#2b82c6">4</text>
<circle cx="522.0" cy="377.9" r="6.5" fill="#fff" stroke="#49a6dc" stroke-width="0.55"/>
<text x="522.0" y="379.79999999999995" font-size="5.3" text-anchor="middle" font-family="Liberation Sans, sans-serif" fill="#2b82c6">4</text>
<circle cx="270.3" cy="86.85" r="6.5" fill="#fff" stroke="#49a6dc" stroke-width="0.55"/>
<text x="270.3" y="88.75" font-size="5.3" text-anchor="middle" font-family="Liberation Sans, sans-serif" fill="#2b82c6">D</text>
<circle cx="270.3" cy="179.85" r="6.5" fill="#fff" stroke="#49a6dc" stroke-width="0.55"/>
<text x="270.3" y="181.75" font-size="5.3" text-anchor="middle" font-family="Liberation Sans, sans-serif" fill="#2b82c6">C</text>
<circle cx="270.3" cy="272.85" r="6.5" fill="#fff" stroke="#49a6dc" stroke-width="0.55"/>
<text x="270.3" y="274.75" font-size="5.3" text-anchor="middle" font-family="Liberation Sans, sans-serif" fill="#2b82c6">B</text>
<circle cx="270.3" cy="365.9" r="6.5" fill="#fff" stroke="#49a6dc" stroke-width="0.55"/>
<text x="270.3" y="367.79999999999995" font-size="5.3" text-anchor="middle" font-family="Liberation Sans, sans-serif" fill="#2b82c6">A</text>
<circle cx="534.3" cy="86.85" r="6.5" fill="#fff" stroke="#49a6dc" stroke-width="0.55"/>
<text x="534.3" y="88.75" font-size="5.3" text-anchor="middle" font-family="Liberation Sans, sans-serif" fill="#2b82c6">D</text>
<circle cx="534.3" cy="365.9" r="6.5" fill="#fff" stroke="#49a6dc" stroke-width="0.55"/>
<text x="534.3" y="367.79999999999995" font-size="5.3" text-anchor="middle" font-family="Liberation Sans, sans-serif" fill="#2b82c6">A</text>
</svg>
<div style="left:1813.2px;top:97.4px;width:72.5px;height:34.6px;background:#fff;border:1.6px solid #adadad;border-radius:3px;box-shadow:1px 1px 1px #ddd;"></div>
<div style="left:1824.7px;top:101.8px;width:11.8px;height:12.2px;background:#f01010;"></div>
<div style="left:1824.7px;top:114px;width:11.8px;height:12.2px;background:#000078;"></div>
<span class="tx" style="left:1847.5px;top:102.5px;font-size:10.3px;color:#111;">Lateral</span>
<span class="tx" style="left:1847.5px;top:115.4px;font-size:10.3px;color:#111;">Gravity</span>
<div style="left:1890px;top:94.6px;width:19px;height:892.8px;background:#f0f0f0;"></div>
<div style="left:1891px;top:297.6px;width:14.4px;height:489.6px;background:#cdcdcd;"></div>
<svg style="left:1890.2px;top:86.4px;width:17px;height:960px;" viewBox="0 0 17 960"><path d="M4.5 22L8.5 18L12.5 22" fill="none" stroke="#404040" stroke-width="2.2"/><path d="M4.5 892.2L8.5 896.2L12.5 892.2" fill="none" stroke="#404040" stroke-width="2.2"/></svg>
<div style="left:42.2px;top:965.8px;width:351.4px;height:19.7px;background:#fff;border:1px solid #828790;"></div>
<span class="tx" style="left:54.2px;top:970.6px;font-size:12.4px;color:#1c1c9c;">Loads: DL PreComp - PreComposite Dead Load</span>
<div style="left:42.2px;top:987.1px;width:1865.8px;height:19.2px;background:#f0f0f0;"></div>
<div style="left:276px;top:988.6px;width:1380px;height:16.8px;background:#cdcdcd;"></div>
<svg style="left:42.2px;top:988.1px;width:1872px;height:17px;" viewBox="0 0 1872 17"><path d="M10 5L6 9L10 13" fill="none" stroke="#303030" stroke-width="2.2"/><path d="M1837.4 5l4 4l-4 4" fill="none" stroke="#303030" stroke-width="2.2"/></svg>
<div id="dlg" style="left:870.5px;top:273.1px;width:503.3px;height:458.9px;background:#f0f0f0;border:1px solid #8c8c8c;box-shadow:0 5px 22px 2px rgba(0,0,0,0.30);">
<div style="left:0;top:0;width:100%;height:29.5px;background:#fff;"></div>
<span class="tx" style="left:12.0px;top:9.8px;font-size:11.9px;color:#111;">Information for Member PUR32</span>
<svg style="left:478.5px;top:8.1px;width:12px;height:12px;" viewBox="0 0 12 12"><path d="M1 1L11 11M11 1L1 11" stroke="#222" stroke-width="1.3" fill="none"/></svg>
<div style="left:9.8px;top:60.0px;width:483.6px;height:360.5px;background:#c0c0c0;border:1px solid;border-color:#fdfdfd #6e6e6e #6e6e6e #fdfdfd;"></div>
<div style="left:9.8px;top:34.5px;width:49.7px;height:27.4px;background:#f0f0f0;border:1px solid;border-color:#fdfdfd #6e6e6e transparent #fdfdfd;border-bottom:none;"></div>
<div style="left:116.1px;top:38.8px;width:1px;height:20.6px;background:#6e6e6e;"></div>
<div style="left:160.5px;top:38.8px;width:1px;height:20.6px;background:#6e6e6e;"></div>
<span class="tx" style="left:14.6px;top:41.0px;font-size:11px;letter-spacing:-0.35px;">General</span>
<span class="tx" style="left:64.3px;top:42.4px;font-size:11px;letter-spacing:-0.35px;">Properties</span>
<span class="tx" style="left:122.4px;top:42.4px;font-size:11px;letter-spacing:-0.35px;">Design</span>
<div class="grp" style="left:19.4px;top:75.7px;width:249.4px;height:140.0px;"></div>
<div style="left:25.4px;top:81.1px;width:61.2px;height:61.4px;background:#d4d4d4;border:1px solid;border-color:#f4f4f4 #9c9c9c #9c9c9c #f4f4f4;"></div>
<svg style="left:25.4px;top:81.1px;width:61.2px;height:61.4px;" viewBox="0 0 25.5 25.6">
<path d="M2.2 3.2H22.6L20.8 4.7H12.3V21.2H20.8L22.6 22.7H2.2L4 21.2H11.1V4.7H4Z" fill="#0a9a0a" stroke="#056005" stroke-width="0.5"/></svg>
<span class="tx" style="right:362.9px;top:91.1px;font-size:12.1px;color:#000;">Floor</span>
<div class="sunk" style="left:143.1px;top:84.6px;width:118.9px;height:19.8px;background:#c6c6c6;"></div>
<span class="tx" style="left:151.2px;top:90.0px;font-size:11.6px;color:#8f8f8f;">Floor Plan 1</span>
<span class="tx" style="right:362.9px;top:115.6px;font-size:12.1px;color:#000;">Label</span>
<div class="inp" style="left:143.1px;top:109.0px;width:118.9px;height:19.6px;"></div>
<div style="left:148.5px;top:113.7px;width:43.2px;height:13.0px;background:#0a78d7;"></div>
<span class="tx" style="left:149.2px;top:114.2px;font-size:11.6px;color:#fff;">PUR32</span>
<span class="tx" style="right:363.3px;top:133.8px;font-size:12.1px;color:#000;">Length</span>
<span class="tx" style="left:146.8px;top:133.8px;font-size:12.1px;color:#2a8a2a;">35</span>
<span class="tx" style="left:257.2px;top:133.8px;font-size:12.1px;color:#000;">ft</span>
<span class="tx" style="right:363.3px;top:154.5px;font-size:12.1px;color:#000;">Shape</span>
<span class="tx" style="left:146.8px;top:154.5px;font-size:12.1px;color:#2a8a2a;">W18X35</span>
<span class="tx" style="right:363.3px;top:174.4px;font-size:12.1px;color:#000;">Orientation</span>
<div class="inp" style="left:144.6px;top:173.6px;width:114.1px;height:21.0px;"></div>
<span class="tx" style="left:150.7px;top:179.6px;font-size:11.6px;color:#000;">Strong Axis</span>
<div style="left:240.7px;top:176.7px;width:16px;height:15.9px;background:#e4e4e4;border:1px solid;border-color:#fff #6a6a6a #6a6a6a #fff;"></div>
<div class="arr" style="left:244.7px;top:183.1px;"></div>
<div class="grp" style="left:285.8px;top:73.8px;width:195.4px;height:77.2px;"></div>
<span class="tx glab" style="left:292.0px;top:69.2px;font-size:12.3px;">Joint Labels</span>
<span class="tx" style="left:299.7px;top:95.7px;font-size:12.1px;color:#000;">I Joint</span>
<div class="inp" style="left:333.2px;top:92.0px;width:120.6px;height:18.8px;"></div>
<span class="tx" style="left:341.2px;top:96.9px;font-size:11.6px;color:#000;">N37</span>
<span class="tx" style="left:298.0px;top:120.9px;font-size:12.1px;color:#000;">J Joint</span>
<div class="inp" style="left:333.2px;top:117.4px;width:120.6px;height:18.8px;"></div>
<span class="tx" style="left:341.2px;top:122.4px;font-size:11.6px;color:#000;">N38</span>
<div class="grp" style="left:285.8px;top:166.6px;width:195.4px;height:120.6px;"></div>
<span class="tx glab" style="left:292.0px;top:162.1px;font-size:12.3px;">Connection</span>
<span class="tx" style="left:290.6px;top:182.6px;font-size:12.1px;color:#000;">Start Conn</span>
<div class="inp" style="left:351.4px;top:178.4px;width:115.3px;height:20.5px;"></div>
<span class="tx" style="left:357.6px;top:184.2px;font-size:11.6px;color:#000;">None</span>
<div style="left:448.8px;top:181.5px;width:16px;height:15.4px;background:#e4e4e4;border:1px solid;border-color:#fff #6a6a6a #6a6a6a #fff;"></div>
<div class="arr" style="left:452.8px;top:187.7px;"></div>
<span class="tx" style="left:290.6px;top:208.7px;font-size:12.1px;color:#000;">End Conn</span>
<div class="inp" style="left:351.4px;top:204.8px;width:115.3px;height:20.8px;"></div>
<span class="tx" style="left:357.6px;top:210.7px;font-size:11.6px;color:#000;">None</span>
<div style="left:448.8px;top:207.9px;width:16px;height:15.7px;background:#e4e4e4;border:1px solid;border-color:#fff #6a6a6a #6a6a6a #fff;"></div>
<div class="arr" style="left:452.8px;top:214.2px;"></div>
<span class="tx" style="left:297.3px;top:239.9px;font-size:12.1px;color:#000;">Start Col Eccentricity</span>
<div class="chk" style="left:418.3px;top:239.0px;"></div>
<span class="tx" style="left:297.8px;top:266.3px;font-size:12.1px;color:#000;">End Col Eccentricity</span>
<div class="chk" style="left:418.3px;top:265.4px;"></div>
<span class="tx" style="left:284.8px;top:305.0px;font-size:12.1px;color:#000;">Camber</span>
<div class="inp" style="left:332.7px;top:301.5px;width:89.2px;height:18.8px;"></div>
<span class="tx" style="left:424.8px;top:305.0px;font-size:12.1px;color:#000;">in</span>
<div class="grp" style="left:19.4px;top:231.7px;width:249.4px;height:96.6px;"></div>
<span class="tx glab" style="left:26.1px;top:227.2px;font-size:12.3px;">End Releases</span>
<span class="tx" style="left:56.6px;top:248.1px;font-size:12.1px;color:#000;">Start</span>
<div class="inp" style="left:87.2px;top:245.6px;width:114.8px;height:20.0px;"></div>
<span class="tx" style="left:93.3px;top:251.1px;font-size:11.6px;color:#000;">Pinned</span>
<div style="left:184.0px;top:248.7px;width:16px;height:15.0px;background:#e4e4e4;border:1px solid;border-color:#fff #6a6a6a #6a6a6a #fff;"></div>
<div class="arr" style="left:188.0px;top:254.7px;"></div>
<span class="tx" style="left:56.6px;top:276.4px;font-size:12.1px;color:#000;">End</span>
<div class="inp" style="left:87.2px;top:272.0px;width:114.8px;height:21.2px;"></div>
<span class="tx" style="left:93.3px;top:278.1px;font-size:11.6px;color:#000;">Pinned</span>
<div style="left:184.0px;top:275.1px;width:16px;height:16.2px;background:#e4e4e4;border:1px solid;border-color:#fff #6a6a6a #6a6a6a #fff;"></div>
<div class="arr" style="left:188.0px;top:281.7px;"></div>
<span class="tx" style="left:56.6px;top:305.9px;font-size:12.1px;color:#000;">Outrigger?</span>
<div class="chk" style="left:127.9px;top:305.0px;"></div>
<div class="btn" style="left:176.6px;top:428.1px;width:73.9px;height:22.1px;border-color:#1c1c1c;box-shadow:inset 1px 1px 0 #fdfdfd, inset -1px -1px 0 #3c3c3c, inset -2px -2px 0 #8c8c8c;"><span class="tx" style="position:relative !important;top:2.6px;font-size:11.2px;display:inline-block;">OK</span></div>
<div class="btn" style="left:258.7px;top:428.1px;width:74.2px;height:22.1px;"><span class="tx" style="position:relative !important;top:2.6px;font-size:11.2px;display:inline-block;">Cancel</span></div>
<div class="btn" style="left:341.0px;top:428.1px;width:74.4px;height:22.1px;"><span class="tx" style="position:relative !important;top:2.6px;font-size:11.2px;display:inline-block;">Apply</span></div>
<div class="btn" style="left:422.4px;top:428.1px;width:70.8px;height:22.1px;"><span class="tx" style="position:relative !important;top:2.6px;font-size:11.2px;display:inline-block;">Help</span></div>
</div>
<div id="de" style="left:1739.8px;top:540.5px;width:136.8px;height:320.9px;background:#fff;border:1px solid #dcdcdc;box-shadow:0 2px 12px 1px rgba(0,0,0,0.2);">
<span class="tx" style="left:8.2px;top:9.4px;font-size:11.2px;color:#8a8a8a;">Data Entry</span>
<div style="left:115px;top:8.2px;width:17.3px;height:17.3px;background:#cfcfcf;"></div>
<span class="tx" style="left:119.3px;top:12px;font-size:10px;color:#e8e8e8;">✕</span>
<div class="deb" style="left:1px;top:31.0px;width:132.8px;height:14.1px;"><span class="tx" style="position:relative !important;display:inline-block;top:-1.6px;left:2.5px;font-size:12.4px;letter-spacing:-0.1px;">Project Grid</span></div>
<div class="deb" style="left:1px;top:47.1px;width:132.8px;height:14.1px;"><span class="tx" style="position:relative !important;display:inline-block;top:-1.6px;left:2.5px;font-size:12.4px;letter-spacing:-0.1px;">Materials</span></div>
<div class="deb" style="left:1px;top:63.3px;width:132.8px;height:14.1px;"><span class="tx" style="position:relative !important;display:inline-block;top:-1.6px;left:2.5px;font-size:12.4px;letter-spacing:-0.1px;">Deck Definitions</span></div>
<div class="deb" style="left:1px;top:79.4px;width:132.8px;height:14.1px;"><span class="tx" style="position:relative !important;display:inline-block;top:-1.6px;left:2.5px;font-size:12.4px;letter-spacing:-0.1px;">Member Design Rules</span></div>
<div class="deb" style="left:1px;top:95.5px;width:132.8px;height:14.1px;"><span class="tx" style="position:relative !important;display:inline-block;top:-1.6px;left:2.5px;font-size:12.4px;letter-spacing:-0.1px;">Wall Design Rules</span></div>
<div class="deb" style="left:1px;top:111.7px;width:132.8px;height:14.1px;"><span class="tx" style="position:relative !important;display:inline-block;top:-1.6px;left:2.5px;font-size:12.4px;letter-spacing:-0.1px;">Connection Rules</span></div>
<div class="deb" style="left:1px;top:127.8px;width:132.8px;height:14.1px;"><span class="tx" style="position:relative !important;display:inline-block;top:-1.6px;left:2.5px;font-size:12.4px;letter-spacing:-0.1px;">Area Load Definitions</span></div>
<div class="deb" style="left:1px;top:143.9px;width:132.8px;height:14.1px;"><span class="tx" style="position:relative !important;display:inline-block;top:-1.6px;left:2.5px;font-size:12.4px;letter-spacing:-0.1px;">Point Locations</span></div>
<div class="deb" style="left:1px;top:160.1px;width:132.8px;height:14.1px;"><span class="tx" style="position:relative !important;display:inline-block;top:-1.6px;left:2.5px;font-size:12.4px;letter-spacing:-0.1px;">Columns</span></div>
<div class="deb" style="left:1px;top:176.2px;width:132.8px;height:14.1px;"><span class="tx" style="position:relative !important;display:inline-block;top:-1.6px;left:2.5px;font-size:12.4px;letter-spacing:-0.1px;">Column Stacks</span></div>
<div class="deb" style="left:1px;top:192.3px;width:132.8px;height:14.1px;"><span class="tx" style="position:relative !important;display:inline-block;top:-1.6px;left:2.5px;font-size:12.4px;letter-spacing:-0.1px;">Wall Panels</span></div>
<div class="deb" style="left:1px;top:208.5px;width:132.8px;height:14.1px;"><span class="tx" style="position:relative !important;display:inline-block;top:-1.6px;left:2.5px;font-size:12.4px;letter-spacing:-0.1px;">Beams</span></div>
<div class="deb" style="left:1px;top:224.6px;width:132.8px;height:14.1px;"><span class="tx" style="position:relative !important;display:inline-block;top:-1.6px;left:2.5px;font-size:12.4px;letter-spacing:-0.1px;">Diaphragms</span></div>
<div class="deb" style="left:1px;top:240.7px;width:132.8px;height:14.1px;"><span class="tx" style="position:relative !important;display:inline-block;top:-1.6px;left:2.5px;font-size:12.4px;letter-spacing:-0.1px;">Point Loads</span></div>
<div class="deb" style="left:1px;top:256.9px;width:132.8px;height:14.1px;"><span class="tx" style="position:relative !important;display:inline-block;top:-1.6px;left:2.5px;font-size:12.4px;letter-spacing:-0.1px;">Line Loads</span></div>
<div class="deb" style="left:1px;top:273.0px;width:132.8px;height:14.1px;"><span class="tx" style="position:relative !important;display:inline-block;top:-1.6px;left:2.5px;font-size:12.4px;letter-spacing:-0.1px;">Tapered Area Loads</span></div>
<div class="deb" style="left:1px;top:289.1px;width:132.8px;height:14.1px;"><span class="tx" style="position:relative !important;display:inline-block;top:-1.6px;left:2.5px;font-size:12.4px;letter-spacing:-0.1px;">Load Combinations</span></div>
<div class="deb" style="left:1px;top:305.3px;width:132.8px;height:14.1px;"><span class="tx" style="position:relative !important;display:inline-block;top:-1.6px;left:2.5px;font-size:12.4px;letter-spacing:-0.1px;">Floors</span></div>
</div>
</div></body></html>
